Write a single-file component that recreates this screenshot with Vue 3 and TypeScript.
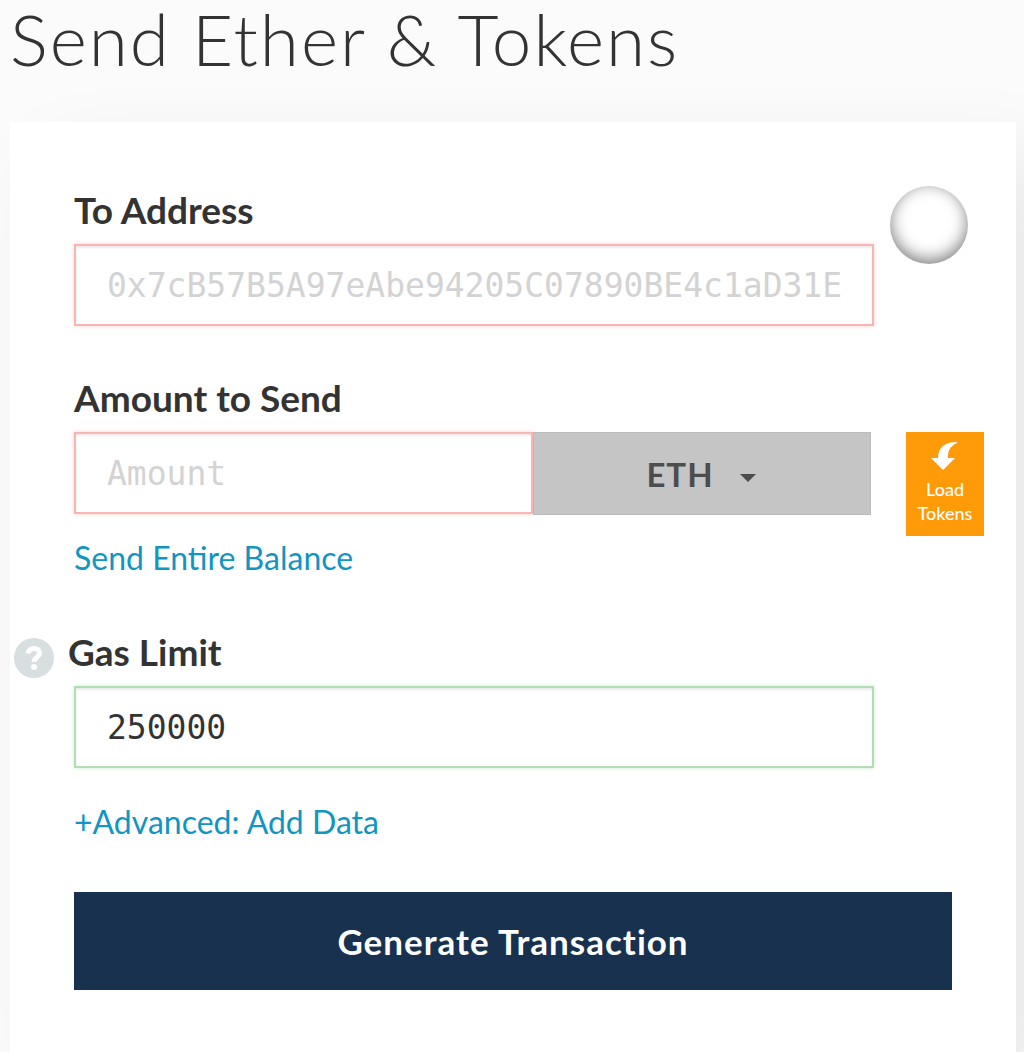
<script setup lang="ts">
import { ref } from 'vue'

const address = ref('')
const amount = ref('')
const unit = ref('ETH')
const gasLimit = ref('250000')
</script>

<template>
  <main class="page">
    <h1 class="title">Send Ether &amp; Tokens</h1>
    <form class="card" @submit.prevent>
      <section class="row">
        <div class="field">
          <label class="label" for="address">To Address</label>
          <input id="address" v-model="address" class="input invalid" type="text" placeholder="0x7cB57B5A97eAbe94205C07890BE4c1aD31E" />
        </div>
        <div class="aside"><div class="identicon"></div></div>
      </section>

      <section class="row">
        <div class="field">
          <label class="label" for="amount">Amount to Send</label>
          <div class="group">
            <input id="amount" v-model="amount" class="input invalid" type="text" placeholder="Amount" />
            <div class="unit">
              <select v-model="unit" aria-label="Unit">
                <option>ETH</option>
              </select>
              <svg class="caret" width="16" height="8" viewBox="0 0 16 8" aria-hidden="true"><path d="M0 0h16L8 8z" fill="#4d4d4d" /></svg>
            </div>
          </div>
          <a class="link balance" href="#">Send Entire Balance</a>
        </div>
        <div class="aside tokens">
          <button class="load" type="button">
            <svg width="28" height="30" viewBox="0 0 28 30" aria-hidden="true">
              <path d="M26 1C13 1 7 7 7 17H0l12 12 12-12h-7C16.500 10 19 5 26 2z" fill="#fff" />
            </svg>
            <span>Load Tokens</span>
          </button>
        </div>
      </section>

      <section class="row">
        <div class="field">
          <div class="gas-head">
            <a class="help" href="#" aria-label="Help">
              <svg width="40" height="40" viewBox="0 0 40 40" aria-hidden="true">
                <circle cx="20" cy="20" r="20" fill="#d8dfe1" />
                <path d="M14 15.500C14.800 8.600 25.500 9 25.500 15c0 4.500-5.500 4.300-5.500 9" fill="none" stroke="#fff" stroke-width="5" />
                <circle cx="20" cy="29" r="3" fill="#fff" />
              </svg>
            </a>
            <label class="label" for="gas">Gas Limit</label>
          </div>
          <input id="gas" v-model="gasLimit" class="input valid" type="text" />
          <a class="link advanced" href="#">+Advanced: Add Data</a>
        </div>
        <div class="aside"></div>
      </section>

      <button class="generate" type="submit">Generate Transaction</button>
    </form>
  </main>
</template>

<style>
body {
  margin: 0;
  background: #fbfbfb;
}
</style>

<style scoped>
.page {
  box-sizing: border-box;
  padding: 0 8px 0 10px;
  overflow-x: clip;
  color: #333;
  font-family: Lato, sans-serif;
}
.title {
  margin: 0 0 44px;
  font-size: 71px;
  font-weight: 300;
  line-height: 78px;
  letter-spacing: 2px;
}
.card {
  display: flex;
  flex-direction: column;
  gap: 48px;
  padding: 64px 32px 64px 64px;
  background: #fff;
  box-shadow: 36px 36px 80px rgba(0, 0, 0, 0.08);
}
.row {
  display: flex;
  gap: 16px;
}
.field {
  display: flex;
  flex: 1;
  flex-direction: column;
  align-items: flex-start;
  min-width: 0;
}
.aside {
  flex: none;
  width: 94px;
}
.label {
  margin-bottom: 10px;
  font-size: 37px;
  font-weight: 700;
  line-height: 48px;
}
.input {
  box-sizing: border-box;
  width: 100%;
  height: 82px;
  padding: 0 30px 0 31px;
  border: 2px solid;
  border-radius: 0;
  outline: none;
  background: #fff;
  color: #333;
  font-family: "DejaVu Sans Mono", monospace;
  font-size: 33px;
}
.input::placeholder {
  color: #d3d3d3;
  opacity: 1;
}
.invalid {
  border-color: #f9b5b1;
  box-shadow: inset 0 2px 2px rgba(0, 0, 0, 0.08), 0 0 4px #fbd0cd;
}
.valid {
  border-color: #b1dfb3;
  box-shadow: inset 0 2px 2px rgba(0, 0, 0, 0.08), 0 0 4px #cdebce;
}
.identicon {
  width: 78px;
  height: 78px;
  border-radius: 50%;
  background: #fff;
  box-shadow: inset 0 -4px 16px rgba(0, 0, 0, 0.5);
}
.group {
  display: flex;
  box-sizing: border-box;
  width: 100%;
  padding-right: 3px;
}
.group .input {
  flex: 1;
  min-width: 0;
}
.unit {
  position: relative;
  flex: none;
  width: 338px;
}
.unit select {
  width: 100%;
  height: 83px;
  padding: 0 44px 0 0;
  border: 1px solid #bbb;
  border-radius: 0;
  appearance: none;
  background: #c5c5c5;
  color: #4d4d4d;
  font-family: Lato, sans-serif;
  font-size: 33px;
  font-weight: 700;
  letter-spacing: 1px;
  text-align: center;
  text-align-last: center;
}
.caret {
  position: absolute;
  top: 42px;
  right: 115px;
  pointer-events: none;
}
.link {
  color: #1295c1;
  font-size: 32px;
  line-height: 44px;
  text-decoration: none;
}
.balance {
  margin-top: 21px;
}
.advanced {
  margin-top: 32px;
}
.tokens {
  box-sizing: border-box;
  padding: 58px 0 0 16px;
}
.load {
  display: flex;
  flex-direction: column;
  align-items: center;
  gap: 6px;
  width: 78px;
  height: 104px;
  padding: 9px 8px 11px;
  border: 0;
  background: #ff9a09;
  color: #fff;
  font-family: Lato, sans-serif;
  font-size: 18px;
  font-weight: 500;
  line-height: 24px;
}
.gas-head {
  display: flex;
  gap: 14px;
  margin-left: -60px;
}
.help {
  height: 40px;
  margin-top: 10px;
}
.help svg {
  display: block;
}
.generate {
  height: 98px;
  margin-right: 32px;
  border: 0;
  background: #17314f;
  color: #fff;
  font-family: Lato, sans-serif;
  font-size: 35px;
  font-weight: 700;
  letter-spacing: 1px;
}
</style>
